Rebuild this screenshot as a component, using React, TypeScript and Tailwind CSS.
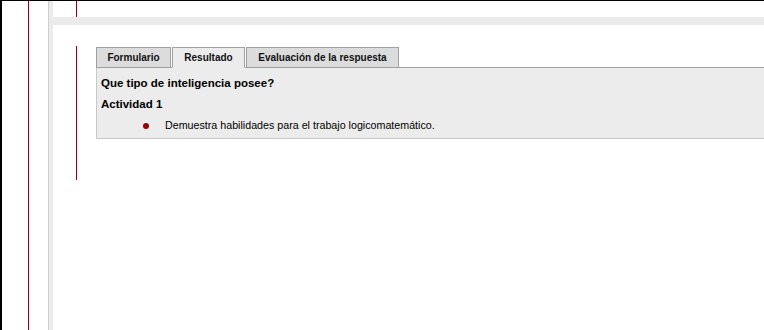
import { useState } from 'react'

const TABS = [
  { label: 'Formulario', width: 'w-[75px]' },
  { label: 'Resultado', width: 'w-[73px]' },
  { label: 'Evaluación de la respuesta', width: 'w-[153px]' },
]

export default function App() {
  const [active, setActive] = useState(1)

  return (
    <div className="h-[330px] w-[764px] overflow-hidden bg-white border-t border-black flex font-['Liberation_Sans',Arial,sans-serif]">
      {/* left frame */}
      <div className="w-[2px] bg-black shrink-0" />
      <div className="w-[26px] shrink-0" />
      <div className="w-px bg-[#9b0011] shrink-0" />
      <div className="w-[19px] shrink-0" />
      <div className="w-[5px] shrink-0 border-l border-[#cfcfcf] bg-[#ebebeb]" />

      {/* main frame */}
      <div className="flex-1 flex flex-col min-w-0">
        <div className="h-[16px] pl-[23px] flex">
          <div className="w-px bg-[#9b0011]" />
        </div>
        <div className="h-[8px] bg-[#ebebeb]" />

        <div className="flex pl-[23px]">
          <div className="w-px h-[134px] mt-[21px] bg-[#9b0011] shrink-0" />

          <div className="flex-1 ml-[19px] mt-[22px] min-w-0">
            <div className="flex gap-px">
              {TABS.map((tab, i) => (
                <button
                  key={tab.label}
                  onClick={() => setActive(i)}
                  className={
                    'h-[21px] border border-[#a0a0a0] text-[10px] font-bold text-[#111] text-center leading-[19px] ' +
                    tab.width +
                    (i === active
                      ? ' bg-[#ececec] border-b-[#ececec] relative z-10'
                      : ' bg-[#dcdcdc]')
                  }
                >
                  {tab.label}
                </button>
              ))}
            </div>

            <div className="-mt-px border-t border-t-[#a0a0a0] border-l border-b border-[#c8c8c8] bg-[#ececec] pl-[4px] pt-[5px] pb-[2px] text-black">
              <p className="text-[11.5px] font-bold leading-[21px]">Que tipo de inteligencia posee?</p>
              <p className="text-[11.5px] font-bold leading-[21px]">Actividad 1</p>
              <ul className="pl-[42px]">
                <li className="flex items-center gap-[16px] leading-[21px] text-[10.7px]">
                  <span className="w-[6px] h-[6px] rounded-full bg-[#990000] shrink-0" />
                  Demuestra habilidades para el trabajo logicomatemático.
                </li>
              </ul>
            </div>
          </div>
        </div>
      </div>
    </div>
  )
}
